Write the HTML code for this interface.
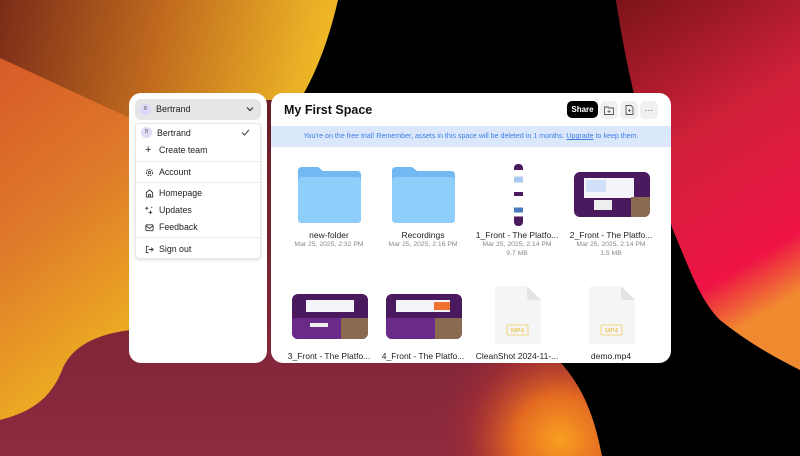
<!DOCTYPE html>
<html style="overflow:hidden"><head><meta charset="utf-8"><style>
*{box-sizing:border-box;margin:0;padding:0}
html,body{width:800px;height:456px;overflow:hidden}
body{position:relative;font-family:"Liberation Sans",sans-serif;background:#6a1a20}
#bg{position:absolute;left:0;top:0;display:block}
.panel{position:absolute;background:#fff;border-radius:12px;overflow:hidden}
.ab{position:absolute}
.menu{position:absolute;left:6px;top:30px;width:126px;height:136px;background:#fff;border:1px solid #e6e6e6;border-radius:4px;box-shadow:0 1px 3px rgba(0,0,0,.12)}
.it{position:absolute;left:9px;font-size:8.8px;color:#222;display:flex;align-items:center;gap:5px;height:12px}
.it svg{width:9px;height:9px}
.sep{position:absolute;left:0;right:0;height:1px;background:#ececec}
.cell{position:absolute;width:94px;text-align:center}
.nm{font-size:8.5px;color:#222;white-space:nowrap}
.dt{font-size:6.8px;color:#888;line-height:9px}
.fold{position:absolute;width:63px;height:56px}
.btn{position:absolute;top:8px;width:18px;height:18px;background:#f0f0f0;border-radius:5px;display:flex;align-items:center;justify-content:center}
.thumb{position:absolute;background:#4b1a5e;border-radius:6px;overflow:hidden}
.doc{position:absolute;width:46px;height:58px}
</style></head><body>
<svg id="bg" width="800" height="456" viewBox="0 0 800 456">
<defs>
<linearGradient id="gb" x1="0" y1="0" x2="0" y2="1"><stop offset="0" stop-color="#5e1a22"/><stop offset="1" stop-color="#8e2a40"/></linearGradient>
<linearGradient id="gt" x1="0" y1="0" x2="1" y2="0.3"><stop offset="0" stop-color="#7a2c18"/><stop offset=".45" stop-color="#c06a1e"/><stop offset=".85" stop-color="#eab026"/><stop offset="1" stop-color="#f4c22a"/></linearGradient>
<linearGradient id="go" x1="0" y1="0" x2="0.3" y2="1"><stop offset="0" stop-color="#d85a28"/><stop offset=".5" stop-color="#de7a2a"/><stop offset="1" stop-color="#eeae22"/></linearGradient>
<linearGradient id="gr" x1="0" y1="0" x2="0.3" y2="1"><stop offset="0" stop-color="#7a1418"/><stop offset=".45" stop-color="#d0203a"/><stop offset=".85" stop-color="#ee1444"/><stop offset="1" stop-color="#f08a30"/></linearGradient>
<radialGradient id="gg" cx="560" cy="440" r="130" gradientUnits="userSpaceOnUse"><stop offset="0" stop-color="#f7a020"/><stop offset=".35" stop-color="#e46a22"/><stop offset=".7" stop-color="#a83030" stop-opacity=".6"/><stop offset="1" stop-color="#8a2838" stop-opacity="0"/></radialGradient>
</defs>
<rect width="800" height="456" fill="url(#gb)"/>
<circle cx="560" cy="440" r="130" fill="url(#gg)"/>
<path d="M0,0 H342 C332,35 318,70 310,100 L130,100 L130,330 C90,335 70,350 62,370 C50,400 30,412 0,420 Z" fill="url(#gt)"/>
<path d="M0,58 L130,118 L130,330 C90,335 70,350 62,370 C50,400 30,412 0,420 Z" fill="url(#go)"/>
<path d="M338,0 H616 C625,60 640,130 673,230 C690,270 700,300 720,320 C745,340 770,355 800,370 V456 H602 C595,420 585,390 561,363 L300,100 C318,70 330,35 338,0 Z" fill="#000"/>
<path d="M616,0 H800 V370 C770,355 745,340 720,320 C700,300 690,270 673,230 C640,130 625,60 616,0 Z" fill="url(#gr)"/>
</svg>

<div class="panel" style="left:129px;top:93px;width:138px;height:270px">
  <div class="ab" style="left:6px;top:6px;width:126px;height:21px;background:#e6e6e6;border-radius:6px"></div>
  <div class="ab" style="left:11px;top:11px;width:11px;height:11px;border-radius:50%;background:#dcd8f8;font-size:5px;color:#666;text-align:center;line-height:11px">B</div>
  <div class="ab" style="left:27px;top:11px;font-size:9px;color:#222;line-height:11px">Bertrand</div>
  <svg class="ab" style="left:117px;top:13px" width="8" height="6" viewBox="0 0 8 6"><path d="M1,1.5 L4,4.5 L7,1.5" stroke="#333" stroke-width="1.2" fill="none"/></svg>
  <div class="menu">
    <div class="ab" style="left:5px;top:3px;width:11px;height:11px;border-radius:50%;background:#e0dcf8;font-size:5px;color:#666;text-align:center;line-height:11px">B</div>
    <div class="it" style="left:21px;top:3px">Bertrand</div>
    <svg class="ab" style="left:105px;top:5px" width="9" height="7" viewBox="0 0 9 7"><path d="M1,3.5 L3.5,6 L8,1" stroke="#444" stroke-width="1" fill="none"/></svg>
    <div class="it" style="top:20px"><span style="font-size:11px;width:9px">+</span>Create team</div>
    <div class="sep" style="top:37px"></div>
    <div class="it" style="top:42px"><svg viewBox="0 0 10 10"><circle cx="5" cy="5" r="3.5" fill="none" stroke="#333" stroke-width="1" stroke-dasharray="2 1"/><circle cx="5" cy="5" r="1.3" fill="none" stroke="#333" stroke-width=".9"/></svg>Account</div>
    <div class="sep" style="top:58px"></div>
    <div class="it" style="top:63px"><svg viewBox="0 0 10 10"><path d="M1.5,9 V4 L5,1 L8.5,4 V9 Z M4,9 V6 H6 V9" fill="none" stroke="#333" stroke-width="1"/></svg>Homepage</div>
    <div class="it" style="top:80px"><svg viewBox="0 0 10 10"><path d="M2,1v3M.5,2.5h3M6,5v4M4,7h4M7,1l1,1" stroke="#333" stroke-width="1" fill="none"/></svg>Updates</div>
    <div class="it" style="top:97px"><svg viewBox="0 0 10 10"><rect x="1" y="2" width="8" height="6.5" rx="1" fill="none" stroke="#333" stroke-width="1"/><path d="M1,3 L5,6 L9,3" fill="none" stroke="#333" stroke-width="1"/></svg>Feedback</div>
    <div class="sep" style="top:113px"></div>
    <div class="it" style="top:119px"><svg viewBox="0 0 10 10"><path d="M4,1.5 H1.5 V8.5 H4 M4,5 H9 M7,3 L9,5 L7,7" fill="none" stroke="#333" stroke-width="1"/></svg>Sign out</div>
  </div>
</div>

<div class="panel" style="left:271px;top:93px;width:400px;height:270px">
  <div class="ab" style="left:13px;top:10px;font-size:12.5px;font-weight:bold;color:#111">My First Space</div>
  <div class="ab" style="left:296px;top:8px;width:31px;height:17px;background:#000;border-radius:5px;color:#fff;font-size:8px;font-weight:bold;text-align:center;line-height:17px">Share</div>
  <div class="btn" style="left:329px"><svg width="10" height="9" viewBox="0 0 10 9"><path d="M.5,1 H4 L5,2 H9.5 V8.5 H.5 Z" fill="none" stroke="#555" stroke-width=".9"/><path d="M5,4v3M3.5,5.5h3" stroke="#555" stroke-width=".8"/></svg></div>
  <div class="btn" style="left:349px"><svg width="9" height="10" viewBox="0 0 9 10"><path d="M1,.5 H6 L8,2.5 V9.5 H1 Z" fill="none" stroke="#555" stroke-width=".9"/><path d="M4.5,4v3M3,5.5h3" stroke="#555" stroke-width=".8"/></svg></div>
  <div class="btn" style="left:369px;color:#555;font-size:9px;line-height:10px">···</div>
  <div class="ab" style="left:0;top:33px;width:400px;height:21px;background:#dbe8fc;font-size:7.1px;color:#3f7de6;text-align:center;line-height:21px">You're on the free trial! Remember, assets in this space will be deleted in 1 months. <u>Upgrade</u> to keep them.</div>

  <svg class="fold" style="left:27px;top:74px" viewBox="0 0 63 56"><path d="M0,4 Q0,0 4,0 H20 L25,4 H59 Q63,4 63,8 V52 Q63,56 59,56 H4 Q0,56 0,52 Z" fill="#72b9f4"/><rect x="0" y="10" width="63" height="46" rx="4" fill="#8fcdfb"/></svg>
  <svg class="fold" style="left:121px;top:74px" viewBox="0 0 63 56"><path d="M0,4 Q0,0 4,0 H20 L25,4 H59 Q63,4 63,8 V52 Q63,56 59,56 H4 Q0,56 0,52 Z" fill="#72b9f4"/><rect x="0" y="10" width="63" height="46" rx="4" fill="#8fcdfb"/></svg>
  <div class="ab" style="left:243px;top:71px;width:9px;height:62px;background:linear-gradient(#4b1a5e 0 10%,#fff 10% 20%,#aac8f0 20% 30%,#fff 30% 45%,#4b1a5e 45% 52%,#fff 52% 70%,#4a7ac0 70% 78%,#fff 78% 85%,#4b1a5e 85%);border-radius:4px"></div>
  <div class="thumb" style="left:303px;top:79px;width:76px;height:45px"><div class="ab" style="left:10px;top:6px;width:50px;height:20px;background:#f4f4f8"></div><div class="ab" style="left:12px;top:8px;width:20px;height:12px;background:#cfe0f8"></div><div class="ab" style="left:57px;top:25px;width:19px;height:20px;background:#8a6a50"></div><div class="ab" style="left:20px;top:28px;width:18px;height:10px;background:#eee"></div></div>

  <div class="cell" style="left:11px;top:137px"><div class="nm">new-folder</div><div class="dt">Mar 25, 2025, 2:32 PM</div></div>
  <div class="cell" style="left:105px;top:137px"><div class="nm">Recordings</div><div class="dt">Mar 25, 2025, 2:16 PM</div></div>
  <div class="cell" style="left:199px;top:137px"><div class="nm">1_Front - The Platfo...</div><div class="dt">Mar 25, 2025, 2:14 PM<br>9.7 MB</div></div>
  <div class="cell" style="left:293px;top:137px"><div class="nm">2_Front - The Platfo...</div><div class="dt">Mar 25, 2025, 2:14 PM<br>1.5 MB</div></div>

  <div class="thumb" style="left:21px;top:201px;width:76px;height:45px"><div class="ab" style="left:14px;top:6px;width:48px;height:12px;background:#f4f4f8"></div><div class="ab" style="left:0;top:24px;width:49px;height:21px;background:#6a2a8a"></div><div class="ab" style="left:49px;top:24px;width:27px;height:21px;background:#8a6a50"></div><div class="ab" style="left:18px;top:29px;width:18px;height:4px;background:#eee"></div></div>
  <div class="thumb" style="left:115px;top:201px;width:76px;height:45px"><div class="ab" style="left:10px;top:6px;width:54px;height:12px;background:#f4f4f8"></div><div class="ab" style="left:48px;top:8px;width:16px;height:8px;background:#f07030"></div><div class="ab" style="left:0;top:24px;width:49px;height:21px;background:#6a2a8a"></div><div class="ab" style="left:49px;top:24px;width:27px;height:21px;background:#8a6a50"></div></div>
  <svg class="doc" style="left:224px;top:193px" viewBox="0 0 46 58"><path d="M4,0 H32 L46,14 V54 Q46,58 42,58 H4 Q0,58 0,54 V4 Q0,0 4,0 Z" fill="#f5f5f5"/><path d="M32,0 L46,14 H36 Q32,14 32,10 Z" fill="#e4e4e4"/><rect x="12" y="39" width="21" height="10" rx="1.5" fill="none" stroke="#f0cc60" stroke-width=".8"/><text x="22.5" y="46.6" font-size="6.3" text-anchor="middle" fill="#eab830" font-family="Liberation Sans">MP4</text></svg>
  <svg class="doc" style="left:318px;top:193px" viewBox="0 0 46 58"><path d="M4,0 H32 L46,14 V54 Q46,58 42,58 H4 Q0,58 0,54 V4 Q0,0 4,0 Z" fill="#f5f5f5"/><path d="M32,0 L46,14 H36 Q32,14 32,10 Z" fill="#e4e4e4"/><rect x="12" y="39" width="21" height="10" rx="1.5" fill="none" stroke="#f0cc60" stroke-width=".8"/><text x="22.5" y="46.6" font-size="6.3" text-anchor="middle" fill="#eab830" font-family="Liberation Sans">MP4</text></svg>

  <div class="cell" style="left:11px;top:258px"><div class="nm">3_Front - The Platfo...</div></div>
  <div class="cell" style="left:105px;top:258px"><div class="nm">4_Front - The Platfo...</div></div>
  <div class="cell" style="left:199px;top:258px"><div class="nm">CleanShot 2024-11-...</div></div>
  <div class="cell" style="left:293px;top:258px"><div class="nm">demo.mp4</div></div>
</div>
</body></html>
